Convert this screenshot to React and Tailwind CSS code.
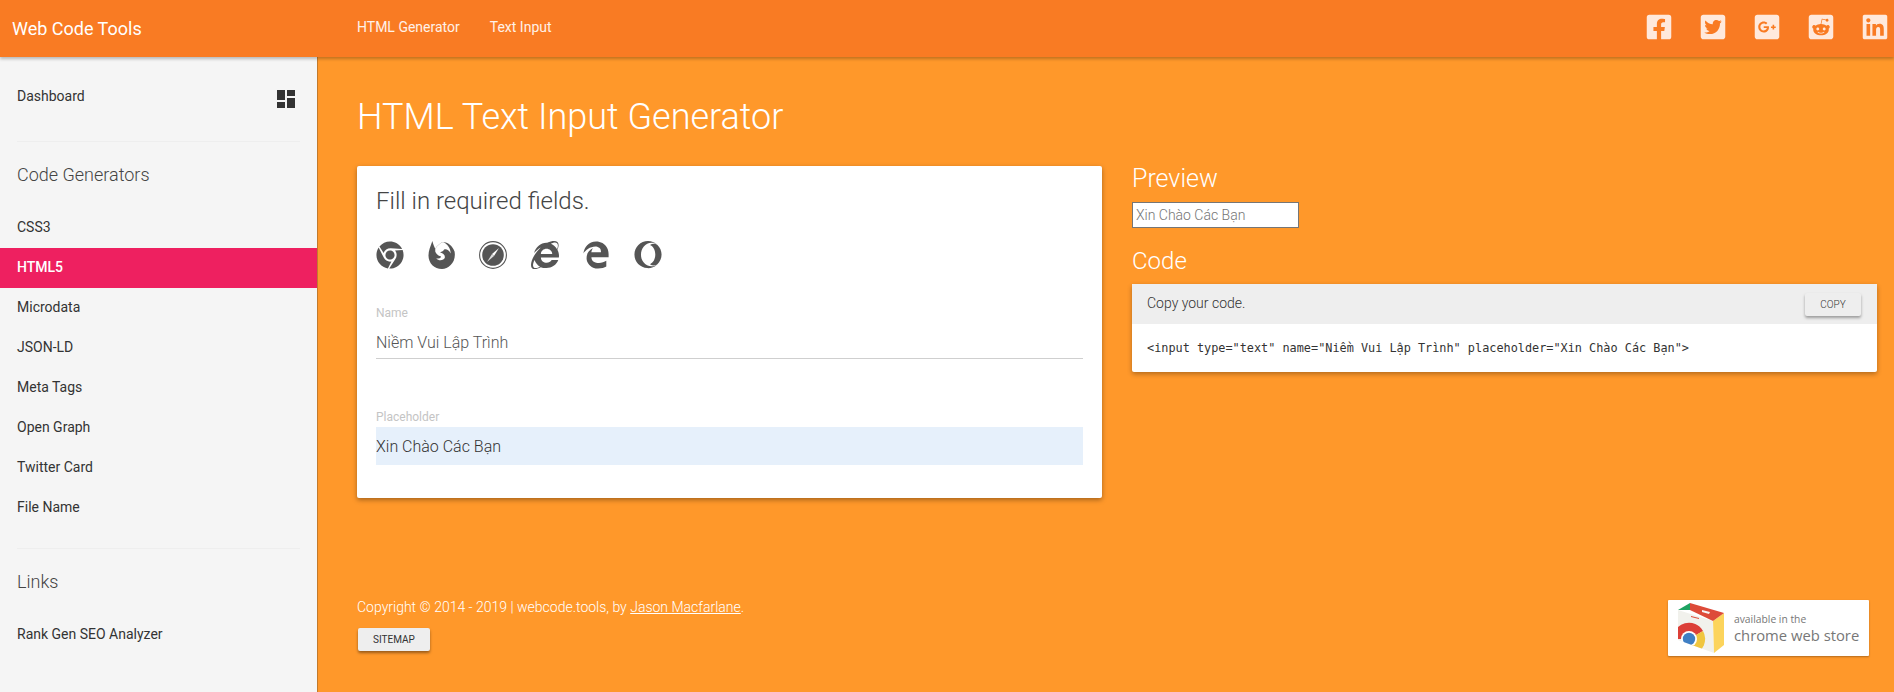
import { FaChrome, FaInternetExplorer, FaEdgeLegacy, FaOpera, FaFacebookSquare, FaTwitterSquare, FaGooglePlusSquare, FaRedditSquare, FaLinkedin } from 'react-icons/fa';
import { MdDashboard } from 'react-icons/md';

const CODE_LINKS = ['CSS3', 'HTML5', 'Microdata', 'JSON-LD', 'Meta Tags', 'Open Graph', 'Twitter Card', 'File Name'];
const SOCIAL = [FaFacebookSquare, FaTwitterSquare, FaGooglePlusSquare, FaRedditSquare, FaLinkedin];

// older firefox glyph, the one in react-icons has a different shape
function FirefoxIcon() {
  return (
    <svg width="28" height="28" viewBox="0 0 28 29" className="shrink-0">
      <path d="M15 1C20 1 25 5 27 11C29 22 21 29 14 29C6 29 0 23 0 15C0 10 2 6 4 0C5 4 6 6 7 8C9 5 12 2 15 1Z" fill="currentColor" />
      <path d="M15 1C12 2 9 5 7 8L7 11C8 14 10 15 13 16C13 18 11 18 8 18C11 21 16 20 17 17C17 14 15 13 12 12C13 11 15 11 16 9C18 8 21 9 23 13C23 8 20 3 15 1Z" fill="#fff" />
    </svg>
  );
}

function SafariIcon() {
  return (
    <svg width="28" height="28" viewBox="0 0 28 28" className="shrink-0">
      <circle cx="14" cy="14" r="13.4" fill="none" stroke="currentColor" strokeWidth="1.1" />
      <circle cx="14" cy="14" r="10.8" fill="currentColor" />
      <polygon points="20,7 15,15 13,13" fill="#fff" />
      <polygon points="8,21 13,13 15,15" fill="#ddd" />
    </svg>
  );
}

const BROWSERS = [FaChrome, FirefoxIcon, SafariIcon, FaInternetExplorer, FaEdgeLegacy, FaOpera];

function SideLink({ label, active }) {
  return (
    <a className={`flex h-10 items-center px-[17px] pb-px text-[14px] ${active ? 'bg-[#ee2060] text-white font-medium' : 'text-[#333]'}`}>
      {label}
    </a>
  );
}

function SideHeading({ label }) {
  return (
    <div className="flex h-[66px] items-center px-[17px] pb-0.5 text-[18px] font-light text-[#444]">{label}</div>
  );
}

function StoreBag() {
  return (
    <svg width="47" height="50" viewBox="0 0 47 50" className="shrink-0">
      <defs>
        <clipPath id="bag-face">
          <polygon points="1,7 36,18 37,50 1,37" />
        </clipPath>
      </defs>
      <polygon points="1,7 36,18 37,50 1,37" fill="#f1f1ec" />
      <polygon points="36,18 47,10 47,42 37,50" fill="#fcd45c" />
      <polygon points="1,7 13,0 13,7" fill="#1ea362" />
      <polygon points="13,0 47,10 36,18 13,7" fill="#dd4b39" />
      <polygon points="25,7 33,9 32,11 25,9" fill="#f6f6f6" />
      <polygon points="14,13 22,15 22,16 14,14" fill="#dd4b39" />
      <g clipPath="url(#bag-face)">
        <path d="M-4 36A16 16 0 0 1 26 28L12 36Z" fill="#dc3f38" />
        <path d="M26 28A16 16 0 0 1 16 51.5L12 36Z" fill="#f0c63f" />
        <circle cx="12" cy="36" r="8" fill="#fff" />
        <circle cx="12" cy="36" r="6.2" fill="#3f7fc4" />
      </g>
    </svg>
  );
}

export default function App() {
  return (
    <div className="flex h-screen flex-col overflow-hidden bg-[#ff982a] font-['Roboto',sans-serif]">
      <header className="relative z-10 flex h-[57px] shrink-0 items-center bg-[#f97b23] text-white shadow-[0_2px_3px_rgba(0,0,0,0.25)]">
        <div className="w-[357px] pl-3 text-[18px]">Web Code Tools</div>
        <nav className="flex gap-[30px] text-[14px] text-white/90 -mt-[3px]">
          <a>HTML Generator</a>
          <a>Text Input</a>
        </nav>
        <div className="ml-auto flex gap-[26px] pr-[5px] -mt-[3px] text-[#ffe9dc]">
          {SOCIAL.map((Icon, i) => (
            <Icon key={i} size={28} />
          ))}
        </div>
      </header>

      <div className="flex min-h-0 flex-1">
        <aside className="w-[318px] shrink-0 border-r border-[#c27a2c] bg-[#f5f5f5] pt-[19px]">
          <div className="flex h-10 items-center justify-between pl-[17px] pr-[19px] text-[14px] text-[#333]">
            <span>Dashboard</span>
            <MdDashboard size={24} className="mt-1.5 text-[#333]" />
          </div>
          <div className="mx-[17px] mt-[25px] h-px bg-[#eeeeee]" />
          <SideHeading label="Code Generators" />
          {CODE_LINKS.map((label) => (
            <SideLink key={label} label={label} active={label === 'HTML5'} />
          ))}
          <div className="mx-[17px] mt-5 h-px bg-[#eeeeee]" />
          <SideHeading label="Links" />
          <SideLink label="Rank Gen SEO Analyzer" />
        </aside>

        <main className="min-w-0 flex-1 pl-[39px] pr-[17px] pt-[33px]">
          <h1 className="mb-6 h-[52px] text-[36px] font-light leading-[54px] text-white">HTML Text Input Generator</h1>

          <div className="grid grid-cols-[745px_745px] gap-[30px]">
            <section className="rounded-[2px] bg-white px-[19px] pb-[33px] pt-[19px] shadow-[0_2px_5px_rgba(0,0,0,0.35)]">
              <h2 className="h-8 text-[24px] font-light leading-8 text-[#444]">Fill in required fields.</h2>
              <div className="mt-6 flex h-7 gap-[23.5px] text-[#555]">
                {BROWSERS.map((Icon, i) => (
                  <Icon key={i} size={28} />
                ))}
              </div>

              <label className="mt-9 block h-4 text-[12px] leading-4 text-[#c4c4c4]">Name</label>
              <input
                readOnly
                value="Niềm Vui Lập Trình"
                className="block h-[38px] w-full border-b border-[#cfcfcf] pt-1.5 text-[16px] font-light text-[#555] outline-none"
              />

              <label className="mt-[50px] block h-4 text-[12px] leading-4 text-[#c4c4c4]">Placeholder</label>
              <input
                readOnly
                value="Xin Chào Các Bạn"
                className="mt-0.5 block h-[38px] w-full bg-[#e6f0fb] text-[16px] font-light text-[#333] outline-none"
              />
            </section>

            <section>
              <h2 className="h-6 text-[25px] font-light leading-[26px] text-white">Preview</h2>
              <input
                readOnly
                placeholder="Xin Chào Các Bạn"
                className="mt-3 block h-[26px] w-[167px] border border-[#767676] bg-white px-[3px] text-[14px] font-light outline-none placeholder:text-[#757575]"
              />
              <h2 className="mt-5 h-6 text-[24px] font-light leading-[26px] text-white">Code</h2>
              <div className="mt-3 rounded-[2px] bg-white shadow-[0_2px_5px_rgba(0,0,0,0.3)]">
                <div className="flex h-10 items-center justify-between bg-[#eeeeee] pl-[15px] pr-4 text-[14px] font-light text-[#333]">
                  <span className="-mt-0.5">Copy your code.</span>
                  <button className="h-[23px] w-14 rounded-[2px] bg-[#eeeeee] text-[10px] text-[#333] shadow-[0_2px_3px_rgba(0,0,0,0.35)]">
                    COPY
                  </button>
                </div>
                <div className="flex h-12 items-center px-[15px] pt-0.5 font-['DejaVu_Sans_Mono',monospace] text-[11.85px] text-[#333]">
                  {'<input type="text" name="Niềm Vui Lập Trình" placeholder="Xin Chào Các Bạn">'}
                </div>
              </div>
            </section>
          </div>

          <footer className="mr-2 mt-[99px] flex items-start justify-between text-white">
            <div>
              <p className="h-5 text-[14px] font-light leading-5">
                Copyright © 2014 - 2019 | webcode.tools, by <a className="underline">Jason Macfarlane</a>.
              </p>
              <button className="ml-px mt-[11px] block h-[23px] w-[72px] rounded-[2px] bg-[#eeeeee] text-[10px] text-[#333] shadow-[0_2px_3px_rgba(0,0,0,0.4)]">
                SITEMAP
              </button>
            </div>
            <a className="mt-[3px] flex h-14 w-[201px] items-center gap-[10px] rounded-[1px] bg-white pl-[9px] shadow-[0_1px_2px_rgba(0,0,0,0.3)]">
              <StoreBag />
              <span className="flex flex-col font-['Open_Sans',sans-serif] text-[#777]">
                <span className="text-[10.3px] leading-[14px]">available in the</span>
                <span className="text-[14.8px] leading-[18px]">chrome web store</span>
              </span>
            </a>
          </footer>
        </main>
      </div>
    </div>
  );
}
